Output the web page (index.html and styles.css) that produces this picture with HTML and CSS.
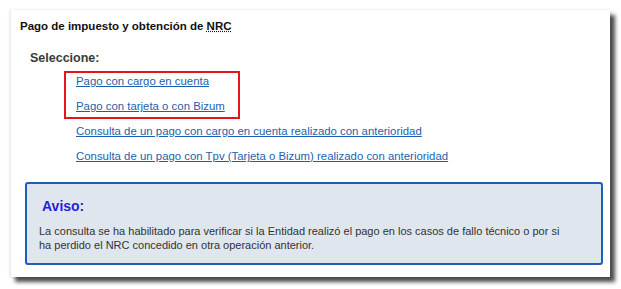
FILE: index.html
```html
<!DOCTYPE html>
<html lang="es">
<head>
    <meta charset="UTF-8">
    <meta name="viewport" content="width=device-width, initial-scale=1.0">
    <title>Pago de impuesto y obtención de NRC</title>
    <link rel="stylesheet" href="styles.css">
</head>
<body>
    <div class="panel">
        <h3 class="panel-title">Pago de impuesto y obtención de <abbr title="Número de Referencia Completo">NRC</abbr></h3>
        <p class="select-label">Seleccione:</p>
        <div class="options">
            <div class="options-marked">
                <a href="#" class="option-link">Pago con cargo en cuenta</a>
                <a href="#" class="option-link">Pago con tarjeta o con Bizum</a>
            </div>
            <a href="#" class="option-link option-plain">Consulta de un pago con cargo en cuenta realizado con anterioridad</a>
            <a href="#" class="option-link option-plain">Consulta de un pago con Tpv (Tarjeta o Bizum) realizado con anterioridad</a>
        </div>
        <div class="notice">
            <h4 class="notice-title">Aviso:</h4>
            <p class="notice-text">La consulta se ha habilitado para verificar si la Entidad realizó el pago en los casos de fallo técnico o por si ha perdido el NRC concedido en otra operación anterior.</p>
        </div>
    </div>
</body>
</html>
```

FILE: styles.css
```css
body { margin: 0; padding: 10px 0 12px 10px; background: #fff; font-family: "Liberation Sans", Arial, sans-serif; }
.panel { width: 600px; box-sizing: border-box; padding: 9px 7px 12px 9px; background: #fff; border-left: 1px solid #ececec; box-shadow: 5px 5px 4px rgba(0, 0, 0, 0.7), 0 0 3px rgba(0, 0, 0, 0.12); }
.panel-title { margin: 0; font-size: 11.5px; line-height: 14px; font-weight: bold; color: #111; }
.panel-title abbr { text-decoration: underline dotted; }
.select-label { margin: 16px 0 0 10px; font-size: 12.5px; line-height: 18px; font-weight: bold; color: #3a3a3a; }
.options { display: flex; flex-direction: column; align-items: flex-start; margin: 4px 0 0 44px; gap: 8px; }
.options-marked { display: flex; flex-direction: column; gap: 8px; width: 176px; box-sizing: border-box; padding: 0 0 2px 10px; border: 2px solid #e8141b; }
.option-link { display: block; font-size: 11.4px; line-height: 17px; color: #1c5fae; text-decoration: underline; }
.option-plain { margin-left: 12px; }
.options-marked + .option-plain { margin-top: -4px; }
.notice { margin: 17px 0 0 5px; padding: 14px 40px 11px 12px; background: #dfe6ee; border: 2px solid #1c5fb4; border-radius: 3px; }
.notice-title { margin: 0 0 0 3px; font-size: 14px; line-height: 16px; font-weight: bold; color: #1f1fe0; }
.notice-text { margin: 10px 0 0 0; font-size: 11px; line-height: 14px; color: #333; }
```
